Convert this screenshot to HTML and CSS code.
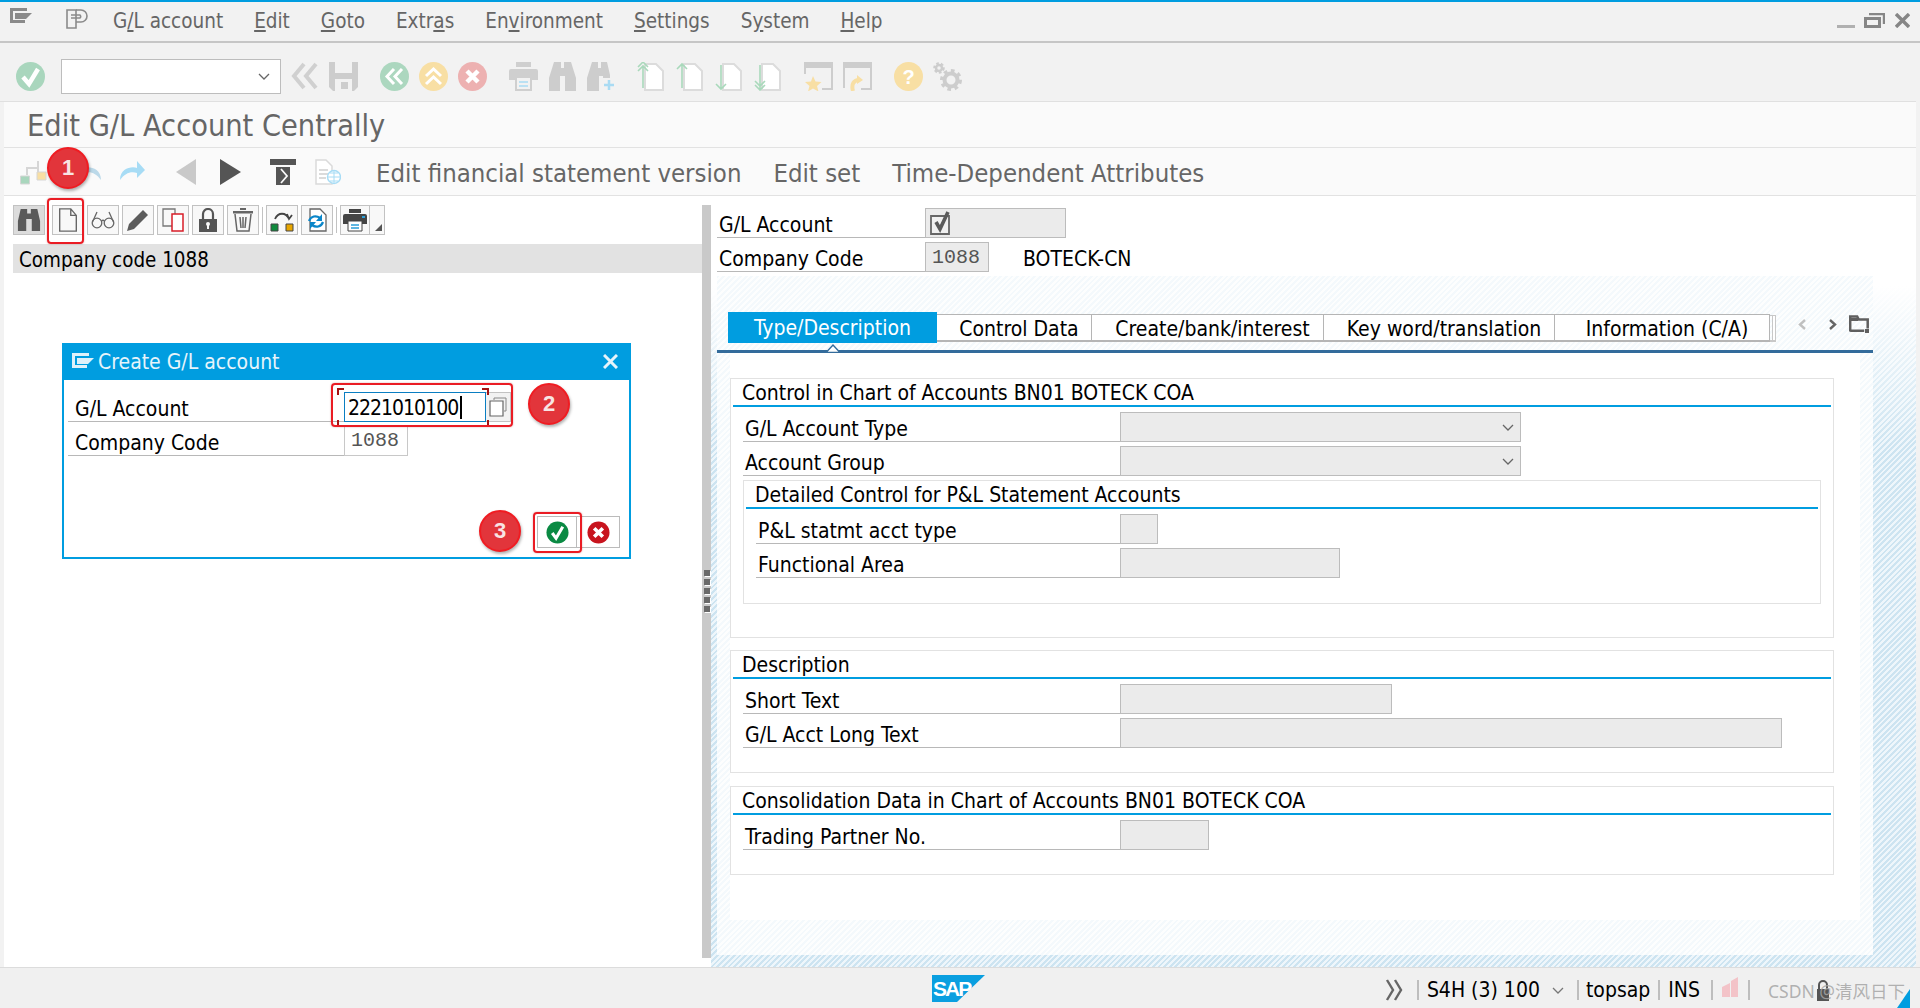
FILE: index.html
```html
<!DOCTYPE html>
<html lang="en">
<head>
<meta charset="utf-8">
<title>Edit G/L Account Centrally</title>
<link rel="stylesheet" href="styles.css">
</head>
<body>
<div class="app">
  <header class="menubar">
    <svg class="ic-session" viewBox="0 0 22 15"><path fill="#8a8a8a" d="M0 0h17v3H3v9h12v3H0z"/><path fill="#8a8a8a" d="M5 5h17l-6 6H5z"/></svg>
    <svg class="ic-p" viewBox="0 0 22 20"><g fill="none" stroke="#8a8a8a" stroke-width="1.6"><path d="M1 1h9v18H1z"/><path d="M10 1h5a6 6 0 0 1 0 12h-5"/><path d="M5 6h9a2 2 0 0 1 0 3H5"/></g></svg>
    <nav class="menu">
      <span>G<u>/</u>L account</span><span><u>E</u>dit</span><span><u>G</u>oto</span><span>Extr<u>a</u>s</span><span>En<u>v</u>ironment</span><span><u>S</u>ettings</span><span>S<u>y</u>stem</span><span><u>H</u>elp</span>
    </nav>
    <div class="winctl">
      <span class="win-min"></span>
      <svg class="win-res" viewBox="0 0 21 17"><path fill="none" stroke="#868686" stroke-width="3" d="M1.5 7.500h14v8h-14z"/><path fill="none" stroke="#868686" stroke-width="2.200" d="M5 3.100h14.900v10"/></svg>
      <svg class="win-close" viewBox="0 0 15 15"><path stroke="#868686" stroke-width="3.400" d="M1 1l13 13M14 1L1 14"/></svg>
    </div>
  </header>

  <div class="toolbar">
    <svg class="ti" viewBox="0 0 29 29"><circle cx="14.500" cy="14.500" r="14.500" fill="#a9d6bd"/><path d="M7 15l6 7 9-15" fill="none" stroke="#fff" stroke-width="4.500"/></svg>
    <div class="combo"><svg class="chev" viewBox="0 0 12 7"><path d="M1 1l5 5 5-5" fill="none" stroke="#666" stroke-width="1.300"/></svg></div>
    <svg class="ti" viewBox="0 0 29 29"><path d="M14 2L4 14l10 12M26 2L16 14l10 12" fill="none" stroke="#d0d0d0" stroke-width="4"/></svg>
    <svg class="ti" viewBox="0 0 29 29"><path fill="#cdcdcd" d="M0 0h29v25l-4 4H4l-4-4z"/><path fill="#f2f2f2" d="M6 0h17v11H6zM6 17h17v12H6z"/><path fill="#cdcdcd" d="M12 20h7v7h-7z"/></svg>
    <svg class="ti grp" viewBox="0 0 29 29"><circle cx="14.500" cy="14.500" r="14.500" fill="#acd7bf"/><path d="M14 7l-7 7.500 7 7.500M22 7l-7 7.500 7 7.500" fill="none" stroke="#fff" stroke-width="3"/></svg>
    <svg class="ti" viewBox="0 0 29 29"><circle cx="14.500" cy="14.500" r="14.500" fill="#f8dfa4"/><path d="M7 14l7.500-7 7.500 7M7 22l7.500-7 7.500 7" fill="none" stroke="#fff" stroke-width="3"/></svg>
    <svg class="ti" viewBox="0 0 29 29"><circle cx="14.500" cy="14.500" r="14.500" fill="#edb1b1"/><path d="M9 9l11 11M20 9L9 20" stroke="#fff" stroke-width="4.500"/></svg>
    <svg class="ti grp" viewBox="0 0 29 29"><path fill="#cfcfcf" d="M7 0h15v5H7zM2 7h25a2 2 0 0 1 2 2v9h-6v-4H6v4H0V9a2 2 0 0 1 2-2z"/><path fill="#f2f2f2" stroke="#cfcfcf" stroke-width="2" d="M7 15h15v13H7z"/><path stroke="#a9dbf3" stroke-width="1.600" d="M10 20h9M10 24h9"/></svg>
    <svg class="ti" viewBox="0 0 29 29"><path fill="#cdcdcd" d="M6 0h7v6h3V0h7l5 16v13H17V14h-5v15H1V16z"/></svg>
    <svg class="ti tin" viewBox="0 0 27 29"><path fill="#cdcdcd" d="M5 0h6v6h3V0h6l3 13v3h-7v-2h-4v15H0V16z"/><path stroke="#a9dbf3" stroke-width="2.500" d="M17 23h10M22 18v10"/></svg>
    <svg class="ti grp" viewBox="0 0 29 29"><path fill="#fff" stroke="#dcdcdc" stroke-width="2" d="M9 2h11l7 7v19H9z"/><path d="M7 26V4M2 9l5-5 5 5M2 5l5-5 5 5" fill="none" stroke="#a9d9bb" stroke-width="1.600"/></svg>
    <svg class="ti" viewBox="0 0 29 29"><path fill="#fff" stroke="#dcdcdc" stroke-width="2" d="M9 2h11l7 7v19H9z"/><path d="M7 26V2M2 7l5-5 5 5" fill="none" stroke="#a9d9bb" stroke-width="1.600"/></svg>
    <svg class="ti" viewBox="0 0 29 29"><path fill="#fff" stroke="#dcdcdc" stroke-width="2" d="M9 2h11l7 7v19H9z"/><path d="M7 3v24M2 22l5 5 5-5" fill="none" stroke="#a9d9bb" stroke-width="1.600"/></svg>
    <svg class="ti" viewBox="0 0 29 29"><path fill="#fff" stroke="#dcdcdc" stroke-width="2" d="M9 2h11l7 7v19H9z"/><path d="M7 3v25M2 19l5 5 5-5M2 23l5 5 5-5" fill="none" stroke="#a9d9bb" stroke-width="1.600"/></svg>
    <svg class="ti grp" viewBox="0 0 29 29"><path fill="#cdcdcd" d="M0 0h29v6H0z"/><path fill="none" stroke="#cdcdcd" stroke-width="2" d="M1 6v6M28 6v21H18"/><path fill="#f8dfa4" d="M9 14l2.500 5.500 6 .5-4.500 4 1.500 5.500L9 26.500 4 29.500 5.500 24 1 20l6-.5z"/></svg>
    <svg class="ti" viewBox="0 0 29 29"><path fill="#cdcdcd" d="M0 0h29v6H0z"/><path fill="none" stroke="#cdcdcd" stroke-width="2" d="M1 6v20M28 6v21H18"/><path fill="none" stroke="#f8dfa4" stroke-width="4" d="M10 29c-2-7 1-11 6-11"/><path fill="#f8dfa4" d="M14 13l6 5-6 4z"/></svg>
    <svg class="ti grp" viewBox="0 0 29 29"><circle cx="14.500" cy="14.500" r="14.500" fill="#f8dfa4"/><text x="14.500" y="21.500" class="qmark">?</text></svg>
    <svg class="ti" viewBox="0 0 29 29"><g fill="none" stroke="#cdcdcd"><circle cx="18" cy="18" r="6.500" stroke-width="4"/><circle cx="18" cy="18" r="9" stroke-width="4" stroke-dasharray="3.500 3.500"/><circle cx="6" cy="6" r="3" stroke-width="2.500"/><circle cx="6" cy="6" r="4.500" stroke-width="2.500" stroke-dasharray="2.500 2"/></g></svg>
  </div>

  <h1 class="title">Edit G/L Account Centrally</h1>

  <div class="apptools">
    <svg class="ai a-h" viewBox="0 0 28 26"><path fill="none" stroke="#d6d6d6" stroke-width="2" d="M7 16V9h11V2M18 9v6"/><path fill="#a9d6bd" stroke="#d6d6d6" d="M0.500 17h9v8h-9z"/><path fill="#f8dfa4" stroke="#d6d6d6" d="M17 13h9v8h-9z"/></svg>
    <svg class="ai a-u" viewBox="0 0 26 22"><path fill="#bcd9e9" d="M25 21C25 9 13 7 8 9V3L0 11l8 8v-5c6-2 12 0 17 7z"/></svg>
    <svg class="ai a-r" viewBox="0 0 27 22"><path fill="#a7dcf5" d="M1 21C1 9 13 7 18 9V2l8 9-8 8v-5c-6-2-12 0-17 7z"/></svg>
    <svg class="ai a-b" viewBox="0 0 20 26"><path fill="#c9c9c9" d="M20 0v26L0 13z"/></svg>
    <svg class="ai a-p" viewBox="0 0 21 26"><path fill="#555" d="M0 0v26l21-13z"/></svg>
    <svg class="ai a-t" viewBox="0 0 26 26"><path fill="#555" d="M0 0h26v6H0zM6 8h14v18H6z"/><path d="M11 10l6 7-6 7" fill="none" stroke="#fafafa" stroke-width="1.800"/></svg>
    <svg class="ai a-d" viewBox="0 0 26 26"><path fill="#fff" stroke="#dadada" stroke-width="1.500" d="M1 1h10l6 6v18H1z"/><path stroke="#d0d0d0" stroke-width="1.500" d="M4 11h9M4 15h9M4 19h7"/><circle cx="19" cy="18" r="6.500" fill="#fff" stroke="#a7dcf5" stroke-width="1.400"/><path fill="none" stroke="#a7dcf5" d="M13 18h13M19 12v13M15 14h8M15 22h8"/></svg>
    <span class="apptext a-first">Edit financial statement version</span>
    <span class="apptext">Edit set</span>
    <span class="apptext">Time-Dependent Attributes</span>
  </div>

  <main class="main">
    <section class="left">
      <div class="alvbar">
        <button class="btn btn-on"><svg viewBox="0 0 26 24"><path fill="#5a5a5a" d="M4 0h7v5h4V0h7l3 13v11h-9V11h-6v13H1V13z"/></svg></button>
        <button class="btn btn-doc"><svg viewBox="0 0 24 26"><path fill="none" stroke="#666" stroke-width="1.500" d="M3 1h12l6 7v17H3zM15 1v7h6"/></svg></button>
        <button class="btn"><svg viewBox="0 0 24 24"><g fill="none" stroke="#666" stroke-width="1.300"><circle cx="6" cy="15" r="4.800"/><circle cx="18" cy="15" r="4.800"/><path d="M10.500 13c1-1 2-1 3 0M1.500 14L6 4M22.500 14L18 4"/></g></svg></button>
        <button class="btn"><svg viewBox="0 0 24 24"><path fill="#5c5c5c" d="M1 23l2-7L17 2l5 5L8 21z"/></svg></button>
        <button class="btn"><svg viewBox="0 0 24 24"><path fill="none" stroke="#777" stroke-width="1.300" d="M2 1h12v17H2z"/><path fill="#fff" stroke="#d81e28" stroke-width="1.500" d="M11 6h11v17H11z"/></svg></button>
        <button class="btn"><svg viewBox="0 0 24 24"><path fill="none" stroke="#555" stroke-width="2.200" d="M7 11V6a5 5 0 0 1 10 0v5"/><path fill="#555" d="M3 11h18v13H3z"/><circle cx="12" cy="16" r="2" fill="#fafafa"/><path fill="#fafafa" d="M11 17h2v4h-2z"/></svg></button>
        <button class="btn"><svg viewBox="0 0 24 24"><path fill="none" stroke="#666" stroke-width="1.500" d="M4 6l2 17h12l2-17M9 9l1 11M15 9l-1 11M12 9v11"/><path fill="#666" d="M2 3h20v2.500H2zM9 0h6v2H9z"/></svg></button>
        <span class="sep"></span>
        <button class="btn"><svg viewBox="0 0 24 24"><path fill="none" stroke="#444" stroke-width="1.800" d="M5 11c3-7 11-7 14 0M17 6l2 5 3-4"/><path fill="#0f8a3c" stroke="#444" d="M1 16h7v7H1z"/><path fill="#e8a600" stroke="#444" d="M16 16h7v7h-7z"/></svg></button>
        <button class="btn"><svg viewBox="0 0 24 24"><path fill="#fff" stroke="#666" stroke-width="1.300" d="M5 1h10l6 6v16H5z"/><path fill="none" stroke="#0a86c9" stroke-width="2.200" d="M4 13c2-5 7-6 11-3M18 14c-2 5-7 6-11 3"/><path fill="#0a86c9" d="M17 6v7h-6zM5 21v-7h6z"/></svg></button>
        <span class="sep"></span>
        <div class="split">
          <button class="btn btn-print"><svg viewBox="0 0 24 24"><path fill="#444" d="M6 1h12v4H6zM2 6h20a2 2 0 0 1 2 2v8h-5v-3H5v3H0V8a2 2 0 0 1 2-2z"/><path fill="#2b9ed8" d="M19 8h3v2h-3z"/><path fill="#fff" stroke="#444" d="M5 13h14v10H5z"/><path stroke="#2b9ed8" stroke-width="1.400" d="M8 17h8M8 20h8"/></svg></button>
          <button class="btn btn-drop"><span class="tri"></span></button>
        </div>
      </div>
      <div class="gridhead">Company code 1088</div>
    </section>

    <div class="sash"><i></i><i></i><i></i><i></i><i></i></div>

    <section class="right">
      <div class="hdrform">
        <div class="row">
          <label class="lbl lbl-top">G/L Account</label>
          <div class="fld fld-check"><svg viewBox="0 0 24 24"><path fill="#f0f0f0" stroke="#666" stroke-width="1.800" d="M1 5h18v18H1z"/><path d="M6 11l4 7 8-17" fill="none" stroke="#5a5a5a" stroke-width="3.600"/></svg></div>
        </div>
        <div class="row">
          <label class="lbl lbl-top">Company Code</label>
          <div class="fld fld-code mono">1088</div>
          <span class="codetext">BOTECK-CN</span>
        </div>
      </div>

      <div class="hatchwrap">
        <div class="sheet">
          <div class="tabstrip">
            <div class="tab tab-on t1">Type/Description</div>
            <div class="tab t2">Control Data</div>
            <div class="tab t3">Create/bank/interest</div>
            <div class="tab t4">Key word/translation</div>
            <div class="tab t5">Information (C/A)</div>
            <span class="tabstack"></span>
            <svg class="tabnav nav-l" viewBox="0 0 9 11"><path d="M7 1L2 5.500 7 10" fill="none" stroke="#c0c0c0" stroke-width="2.400"/></svg>
            <svg class="tabnav nav-r" viewBox="0 0 9 11"><path d="M2 1l5 4.500L2 10" fill="none" stroke="#666" stroke-width="2.400"/></svg>
            <svg class="tabfold" viewBox="0 0 20 18"><path fill="none" stroke="#5f5f5f" stroke-width="2.500" d="M1.200 16.500V1.500h7l1.500 3h9v9M1.200 15.800h14"/><path fill="#5f5f5f" d="M1 3h8v3H1zM16 14h4v4h-4z"/></svg>
          </div>
          <div class="tabline"><svg class="notch" viewBox="0 0 14 9"><path d="M0 8.500L7 1l7 7.500z" fill="#fff" stroke="#336b9b" stroke-width="1.400"/></svg></div>

          <div class="panel">
            <div class="box box-1">
              <div class="boxtitle">Control in Chart of Accounts BN01 BOTECK COA</div>
              <div class="rows">
                <div class="row">
                  <label class="lbl">G/L Account Type</label>
                  <div class="fld w-dd"><svg class="chev" viewBox="0 0 12 7"><path d="M1 1l5 5 5-5" fill="none" stroke="#666" stroke-width="1.300"/></svg></div>
                </div>
                <div class="row">
                  <label class="lbl">Account Group</label>
                  <div class="fld w-dd"><svg class="chev" viewBox="0 0 12 7"><path d="M1 1l5 5 5-5" fill="none" stroke="#666" stroke-width="1.300"/></svg></div>
                </div>
              </div>
              <div class="box box-in">
                <div class="boxtitle boxtitle-in">Detailed Control for P&amp;L Statement Accounts</div>
                <div class="rows rows-in">
                  <div class="row"><label class="lbl lbl-in">P&amp;L statmt acct type</label><div class="fld w-pl"></div></div>
                  <div class="row"><label class="lbl lbl-in">Functional Area</label><div class="fld w-fa"></div></div>
                </div>
              </div>
            </div>

            <div class="box box-2">
              <div class="boxtitle">Description</div>
              <div class="rows">
                <div class="row"><label class="lbl">Short Text</label><div class="fld w-st"></div></div>
                <div class="row"><label class="lbl">G/L Acct Long Text</label><div class="fld w-lt"></div></div>
              </div>
            </div>

            <div class="box box-3">
              <div class="boxtitle">Consolidation Data in Chart of Accounts BN01 BOTECK COA</div>
              <div class="rows">
                <div class="row"><label class="lbl">Trading Partner No.</label><div class="fld w-tp"></div></div>
              </div>
            </div>
          </div>
        </div>
      </div>
    </section>
  </main>

  <footer class="status">
    <svg class="saplogo" viewBox="0 0 53 27"><path fill="#0a9fe0" d="M0 0h53L25 27H0z"/><text x="1" y="21" class="saptext">SAP</text></svg>
    <div class="stat">
      <svg class="st-more" viewBox="0 0 20 22"><path d="M3 1l6 10-6 10M11 1l6 10-6 10" fill="none" stroke="#666" stroke-width="2.400"/></svg>
      <span class="st-sep s1"></span>
      <span class="st-t st-sys">S4H (3) 100</span>
      <svg class="st-chev" viewBox="0 0 12 7"><path d="M1 1l5 5 5-5" fill="none" stroke="#777" stroke-width="1.300"/></svg>
      <span class="st-sep s2"></span>
      <span class="st-t st-u">topsap</span>
      <span class="st-sep s3"></span>
      <span class="st-t st-ins">INS</span>
      <span class="st-sep s4"></span>
      <svg class="st-flag" viewBox="0 0 18 20"><path fill="#f3c3c8" d="M0 20V10l8-4v14zM9 20V4l7-4v20z"/></svg>
      <span class="st-sep s5"></span>
      <span class="wm">CSDN @清风日下<svg class="st-lock" viewBox="0 0 14 22"><path fill="none" stroke="#555" stroke-width="2" d="M3 10V6a4 4 0 0 1 8 0v4"/><path fill="#555" d="M1 10h12v12H1z"/></svg></span>
    </div>
    <span class="corner"></span>
  </footer>

  <div class="dialog">
    <div class="dlg-head">
      <svg class="dlg-ic" viewBox="0 0 22 15"><path fill="#dff1fa" d="M0 0h17v3H3v9h12v3H0z"/><path fill="#dff1fa" d="M5 5h17l-6 6H5z"/></svg>
      <span class="dlg-title">Create G/L account</span>
      <svg class="dlg-x" viewBox="0 0 15 15"><path stroke="#e6f4fb" stroke-width="3" d="M1 1l13 13M14 1L1 14"/></svg>
    </div>
    <div class="dlg-body">
      <div class="row">
        <label class="lbl lbl-dlg">G/L Account</label>
        <div class="input">2221010100<span class="caret"></span></div>
        <button class="vh"><svg viewBox="0 0 18 20"><path fill="none" stroke="#888" d="M5 3V1h12v13h-2"/><path fill="#fff" stroke="#666" stroke-width="1.200" d="M1 4h13v15H1z"/></svg></button>
      </div>
      <div class="row">
        <label class="lbl lbl-dlg">Company Code</label>
        <div class="fld-white mono">1088</div>
      </div>
      <div class="dlg-actions">
        <button class="dbtn"><svg viewBox="0 0 24 24"><circle cx="12" cy="12" r="11.500" fill="#0a8a43"/><path d="M6.500 12.500l4 5.500 7-12" fill="none" stroke="#fff" stroke-width="3.200"/></svg></button>
        <button class="dbtn dbtn-c"><svg viewBox="0 0 24 24"><circle cx="12" cy="12" r="11.500" fill="#c8141e"/><path d="M7.500 7.500l9 9M16.500 7.500l-9 9" stroke="#fff" stroke-width="3.800"/></svg></button>
      </div>
    </div>
  </div>

  <span class="focus"><i class="fc tl"></i><i class="fc tr"></i><i class="fc bl"></i><i class="fc br"></i></span>
  <span class="redbox rb1"></span>
  <span class="redbox rb2"></span>
  <span class="redbox rb3"></span>
  <span class="badge b1">1</span>
  <span class="badge b2">2</span>
  <span class="badge b3">3</span>
</div>
</body>
</html>
```
FILE: styles.css
```css
* { box-sizing: border-box; }
html, body { margin: 0; height: 100%; }
body {
  background: #f2f2f2;
  font-family: "DejaVu Sans", "Noto Sans", sans-serif;
  font-stretch: condensed;
  font-size: 21px;
  color: #000;
  overflow: hidden;
}
.app {
  position: relative;
  width: 1920px;
  height: 1008px;
  display: flex;
  flex-direction: column;
  border-top: 2px solid #009de0;
}
svg { display: block; flex: none; }
button { padding: 0; font: inherit; }

/* menu */
.menubar {
  height: 41px;
  border-bottom: 2px solid #c6c6c6;
  display: flex;
  align-items: center;
  padding: 0 10px 2px 10px;
  color: #666;
  flex: none;
}
.ic-session { width: 22px; height: 15px; margin-top: -10px; }
.ic-p { width: 22px; height: 20px; margin-left: 34px; margin-top: -4px; }
.menu { display: flex; gap: 31px; margin-left: 25px; font-size: 20.500px; }
.winctl { margin-left: auto; display: flex; align-items: flex-end; height: 17px; margin-top: -3px; }
.win-min { width: 18px; height: 3px; background: #b0b0b0; }
.win-res { width: 21px; height: 17px; margin-left: 9px; }
.win-close { width: 15px; height: 15px; margin-left: 10px; }

/* system toolbar */
.toolbar {
  height: 59px;
  flex: none;
  display: flex;
  align-items: center;
  gap: 10px;
  padding: 9px 0 0 16px;
  margin: 0 4px 0 0;
  border-bottom: 1px solid #e0e0e0;
}
.ti { width: 29px; height: 29px; }
.tin { width: 27px; }
.grp { margin-left: 12px; }
.combo {
  width: 220px;
  height: 35px;
  margin: 0 -1px 0 6px;
  background: #fff;
  border: 1px solid #bdbdbd;
  display: flex;
  align-items: center;
  justify-content: flex-end;
  padding-right: 10px;
}
.chev { width: 12px; height: 7px; }
.qmark { fill: #fff; font: bold 20px "Liberation Sans", sans-serif; text-anchor: middle; }

/* title */
.title {
  margin: 0 4px;
  height: 46px;
  flex: none;
  padding-left: 23px;
  background: #fafafa;
  border-bottom: 1px solid #e2e2e2;
  color: #666;
  font-size: 30.400px;
  font-weight: 400;
  line-height: 48px;
  overflow: hidden;
}

/* application toolbar */
.apptools {
  margin: 0 4px;
  height: 48px;
  flex: none;
  background: #fafafa;
  border-bottom: 1px solid #e2e2e2;
  display: flex;
  align-items: center;
  padding: 0 0 0 16px;
  color: #666;
  font-size: 25.500px;
}
.a-h { width: 28px; height: 26px; }
.a-u { width: 26px; height: 22px; margin-left: 28px; margin-top: -4px; }
.a-r { width: 27px; height: 22px; margin-left: 17px; margin-top: -4px; }
.a-b { width: 20px; height: 26px; margin-left: 30px; }
.a-p { width: 21px; height: 26px; margin-left: 24px; }
.a-t { width: 26px; height: 26px; margin-left: 29px; }
.a-d { width: 26px; height: 26px; margin-left: 19px; }
.apptext { margin-left: 32px; padding-top: 2px; }
.a-first { margin-left: 35px; }

/* main */
.main {
  flex: 1;
  min-height: 0;
  margin: 0 4px 0 4px;
  display: flex;
  background: #fff;
}
.left { width: 698px; flex: none; padding: 9px 0 0 9px; background: #fff; }
.alvbar { display: flex; align-items: center; height: 30px; gap: 3px; }
.btn {
  width: 32px;
  height: 30px;
  border: 1px solid #c2c2c2;
  background: #f8f8f8;
  display: flex;
  align-items: center;
  justify-content: center;
}
.btn svg { width: 24px; height: 24px; }
.btn-on { background: #dcdcdc; }
.btn-doc { margin-left: 4px; }
.sep { width: 1px; height: 26px; background: #c2c2c2; }
.split { display: flex; }
.btn-print { width: 30px; }
.btn-drop { width: 15px; border-left: 0; position: relative; }
.tri {
  position: absolute;
  right: 2px;
  bottom: 3px;
  border-style: solid;
  border-width: 0 0 7px 7px;
  border-color: transparent transparent #555 transparent;
}
.gridhead {
  margin-top: 9px;
  height: 29px;
  line-height: 33px;
  font-size: 20.400px;
  background: #e2e2e2;
  padding-left: 6px;
}

.sash {
  width: 9px;
  flex: none;
  margin: 9px 0 9px 0;
  background: #c9c9c9;
  display: flex;
  flex-direction: column;
  gap: 3px;
  align-items: center;
  justify-content: center;
  padding-top: 18px;
}
.sash i { width: 6px; height: 6px; background: #6a6a6a; box-shadow: 1px 1px 0 #fff; }

/* right side */
.right { flex: 1; min-width: 0; display: flex; flex-direction: column; background: #fff; }
.hdrform {
  height: 80px;
  flex: none;
  padding: 12px 0 0 6px;
  display: flex;
  flex-direction: column;
  gap: 4px;
}
.row { display: flex; align-items: flex-end; height: 30px; }
.lbl {
  display: block;
  height: 30px;
  line-height: 35px;
  border-bottom: 1px solid #b8b8b8;
  width: 377px;
  padding-left: 2px;
  flex: none;
  overflow: hidden;
}
.lbl-top { width: 208px; }
.fld {
  height: 30px;
  background: #ebebeb;
  border: 1px solid #bcbcbc;
  display: flex;
  align-items: center;
  justify-content: flex-end;
  padding-right: 6px;
  flex: none;
}
.fld-check { width: 141px; justify-content: flex-start; padding: 0 0 0 4px; }
.fld-check svg { width: 24px; height: 24px; }
.fld-code { width: 64px; justify-content: flex-start; padding: 0 0 0 6px; color: #555; }
.mono { font-family: "Liberation Mono", monospace; font-stretch: normal; font-size: 20px; }
.codetext { margin-left: 34px; line-height: 35px; height: 30px; }

.hatchwrap {
  flex: 1;
  min-height: 0;
  display: flex;
  padding: 0 43px 12px 6px;
  background:
    linear-gradient(#fff 10px, rgba(255, 255, 255, 0) 170px),
    repeating-linear-gradient(135deg, #cde4f1 0 2px, #eef6fb 2px 4px);
}
.sheet {
  flex: 1;
  min-width: 0;
  display: flex;
  flex-direction: column;
  background: repeating-linear-gradient(135deg, #f4f9fc 0 2px, #fdfefe 2px 4px);
}
.tabstrip {
  position: relative;
  height: 74px;
  flex: none;
  padding: 36px 0 0 11px;
  display: flex;
  align-items: flex-start;
}
.tab {
  height: 28px;
  margin-top: 2px;
  padding-left: 10px;
  background: #fff;
  border: 1px solid #b5b5b5;
  border-width: 1px 1px 2px 0;
  text-align: center;
  line-height: 29px;
  flex: none;
  white-space: nowrap;
}
.tab-on {
  height: 31px;
  margin-top: 0;
  padding-left: 0;
  background: #009de0;
  border: 0;
  color: #fff;
  line-height: 33px;
}
.t1 { width: 209px; }
.t2 { width: 155px; }
.t3 { width: 232px; }
.t4 { width: 231px; }
.t5 { width: 215px; }
.tabstack {
  width: 6px;
  height: 27px;
  margin-top: 3px;
  border: 1px solid #c8c8c8;
  border-width: 1px 1px 2px 0;
  box-shadow: inset -2px 0 0 #fff, inset -3px 0 0 #c8c8c8;
}
.tabnav { width: 9px; height: 11px; margin-top: 7px; }
.nav-l { margin-left: 22px; }
.nav-r { margin-left: 21px; }
.tabfold { width: 20px; height: 18px; margin-left: 12px; margin-top: 3px; }
.tabline {
  position: relative;
  height: 3px;
  flex: none;
  background: #336b9b;
}
.notch { position: absolute; left: 109px; top: -6px; width: 14px; height: 9px; }
.panel {
  margin: 0 13px;
  padding-top: 25px;
  height: 567px;
  flex: none;
  background: #fff;
  display: flex;
  flex-direction: column;
  width: 1130px;
}
.box {
  width: 1104px;
  border: 1px solid #e2e2e2;
  background: #fff;
  flex: none;
}
.box-1 { height: 260px; }
.box-2 { height: 123px; margin-top: 12px; }
.box-3 { height: 89px; margin-top: 13px; }
.box-in {
  width: 1078px;
  height: 124px;
  margin: 4px 0 0 12px;
}
.boxtitle {
  margin: 0 2px;
  height: 28px;
  line-height: 28px;
  padding-left: 9px;
  border-bottom: 2px solid #009de0;
  white-space: nowrap;
}
.boxtitle-in { padding-left: 9px; height: 28px; }
.rows {
  padding: 5px 0 0 12px;
  display: flex;
  flex-direction: column;
  gap: 4px;
}
.rows-in { padding-left: 12px; }
.lbl-in { width: 364px; }
.w-dd { width: 401px; }
.w-pl { width: 38px; }
.w-fa { width: 220px; }
.w-st { width: 272px; }
.w-lt { width: 662px; }
.w-tp { width: 89px; }

/* status */
.status {
  position: relative;
  height: 41px;
  flex: none;
  background: #f0f0f0;
  border-top: 1px solid #dcdcdc;
  padding: 9px 30px 0 932px;
  display: flex;
  align-items: flex-start;
}
.saplogo { width: 53px; height: 27px; margin-top: -2px; }
.saptext { font: bold 21px "Liberation Sans", sans-serif; fill: #fff; letter-spacing: -2px; }
.stat { margin-left: auto; display: flex; align-items: center; height: 26px; }
.st-more { width: 20px; height: 22px; }
.st-sep { width: 2px; height: 20px; background: #bdbdbd; }
.s1 { margin-left: 13px; }
.st-t { line-height: 26px; }
.st-sys { margin-left: 8px; }
.st-chev { width: 12px; height: 7px; margin-left: 12px; }
.s2 { margin-left: 13px; }
.st-u { margin-left: 7px; }
.s3 { margin-left: 8px; }
.st-ins { margin-left: 8px; }
.s4 { margin-left: 11px; }
.st-flag { width: 18px; height: 20px; margin-left: 9px; margin-top: -6px; }
.s5 { margin-left: 8px; }
.wm {
  position: relative;
  isolation: isolate;
  margin-left: 18px;
  width: 122px;
  white-space: nowrap;
  color: rgba(165, 165, 165, .85);
  font-family: "Noto Sans", "Noto Sans CJK SC", sans-serif;
  font-stretch: normal;
  font-size: 17.500px;
}
.st-lock { position: absolute; z-index: -1; left: 48px; top: 1px; width: 14px; height: 22px; }
.corner {
  position: absolute;
  right: 10px;
  bottom: 0;
  border-style: solid;
  border-width: 0 0 19px 13px;
  border-color: transparent transparent #009de0 transparent;
}

/* dialog */
.dialog {
  position: absolute;
  left: 62px;
  top: 341px;
  width: 569px;
  height: 216px;
  background: #fff;
  border: 2px solid #009de0;
  border-top: 0;
  display: flex;
  flex-direction: column;
}
.dlg-head {
  height: 37px;
  flex: none;
  background: #009de0;
  display: flex;
  align-items: center;
  padding: 0 10px;
  color: #e6f4fb;
  margin: 0 -2px;
}
.dlg-ic { width: 22px; height: 15px; margin-top: -3px; }
.dlg-title { margin-left: 4px; }
.dlg-x { width: 15px; height: 15px; margin-left: auto; margin-right: 3px; }
.dlg-body { flex: 1; padding: 12px 0 0 4px; display: flex; flex-direction: column; gap: 4px; position: relative; }
.lbl-dlg { width: 276px; padding-left: 7px; }
.input {
  width: 142px;
  height: 30px;
  background: #fff;
  border: 1px solid #0a7ec2;
  line-height: 31px;
  padding-left: 3px;
  letter-spacing: -1px;
  display: flex;
}
.caret { width: 2px; height: 23px; background: #000; margin: 3px 0 0 2px; }
.vh {
  width: 25px;
  height: 30px;
  background: #f2f2f2;
  border: 1px solid #c2c2c2;
  border-left: 0;
  display: flex;
  align-items: center;
  justify-content: center;
}
.vh svg { width: 18px; height: 20px; }
.fld-white {
  width: 64px;
  height: 30px;
  border: 1px solid #c8c8c8;
  border-top: 0;
  padding-left: 6px;
  line-height: 29px;
  color: #555;
}
.dlg-actions { position: absolute; right: 9px; bottom: 9px; display: flex; }
.dbtn {
  width: 40px;
  height: 32px;
  background: #fff;
  border: 1px solid #bbb;
  display: flex;
  align-items: center;
  justify-content: center;
}
.dbtn svg { width: 23px; height: 23px; }
.dbtn-c { width: 43px; border-left: 0; }

/* annotations */
.redbox {
  position: absolute;
  border: 2px solid #ea1c24;
  border-radius: 4px;
  box-shadow: 0 0 2px rgba(120, 0, 0, .35);
}
.rb1 { left: 47px; top: 196px; width: 37px; height: 46px; }
.rb2 { left: 331px; top: 381px; width: 182px; height: 44px; }
.rb3 { left: 533px; top: 510px; width: 49px; height: 41px; }
.badge {
  position: absolute;
  width: 42px;
  height: 42px;
  border-radius: 50%;
  background: #e2353b;
  border: 2px solid #f01c22;
  box-shadow: 1px 2px 3px rgba(0, 0, 0, .3);
  color: #f8e4e4;
  font: bold 22px/38px "Liberation Sans", sans-serif;
  text-align: center;
}
.b1 { left: 47px; top: 145px; }
.b2 { left: 528px; top: 381px; }
.b3 { left: 479px; top: 508px; }
.focus { position: absolute; left: 337px; top: 386px; width: 152px; height: 39px; }
.fc { position: absolute; width: 7px; height: 7px; border: 0 solid #a51212; }
.tl { left: 0; top: 0; border-width: 2px 0 0 2px; }
.tr { right: 0; top: 0; border-width: 2px 2px 0 0; }
.bl { left: 0; bottom: 0; border-width: 0 0 2px 2px; }
.br { right: 0; bottom: 0; border-width: 0 2px 2px 0; }
```
